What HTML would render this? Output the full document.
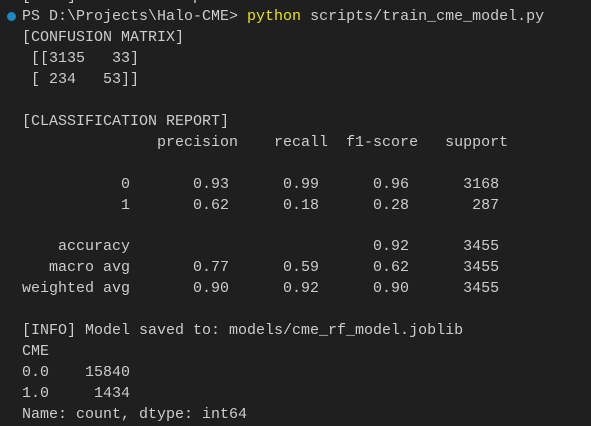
<!DOCTYPE html>
<html><head><meta charset="utf-8"><style>
html,body{margin:0;padding:0;background:#1f1f1f;width:591px;height:426px;overflow:hidden}
pre{position:absolute;left:22px;top:-13.5px;margin:0;font-family:"Liberation Mono",monospace;font-size:15px;line-height:20.9px;color:#cccccc;white-space:pre}
.y{color:#e5e510}
.dot{position:absolute;left:7px;top:12px;width:9px;height:9px;border-radius:50%;background:#1b8ac4}
</style></head><body>
<div class="dot"></div>
<pre>[INFO] CME labeled points: 1434/6
PS D:\Projects\Halo-CME&gt; <span class="y">python</span> scripts/train_cme_model.py
[CONFUSION MATRIX]
 [[3135   33]
 [ 234   53]]

[CLASSIFICATION REPORT]
               precision    recall  f1-score   support

           0       0.93      0.99      0.96      3168
           1       0.62      0.18      0.28       287

    accuracy                           0.92      3455
   macro avg       0.77      0.59      0.62      3455
weighted avg       0.90      0.92      0.90      3455

[INFO] Model saved to: models/cme_rf_model.joblib
CME
0.0    15840
1.0     1434
Name: count, dtype: int64</pre>
</body></html>
